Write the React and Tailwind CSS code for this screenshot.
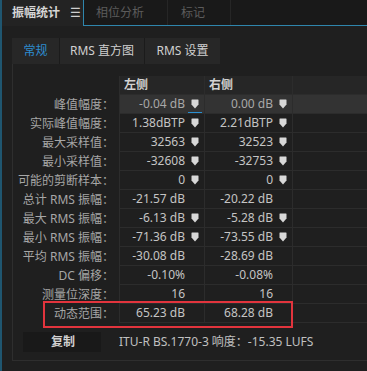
import React from 'react';

const rows = [
  { label: '峰值幅度：', l: '-0.04 dB', r: '0.00 dB', mark: true, sel: true },
  { label: '实际峰值幅度：', l: '1.38dBTP', r: '2.21dBTP', mark: true },
  { label: '最大采样值：', l: '32563', r: '32523', mark: true },
  { label: '最小采样值：', l: '-32608', r: '-32753', mark: true },
  { label: '可能的剪断样本：', l: '0', r: '0', mark: true },
  { label: '总计 RMS 振幅：', l: '-21.57 dB', r: '-20.22 dB' },
  { label: '最大 RMS 振幅：', l: '-6.13 dB', r: '-5.28 dB', mark: true },
  { label: '最小 RMS 振幅：', l: '-71.36 dB', r: '-73.55 dB', mark: true },
  { label: '平均 RMS 振幅：', l: '-30.08 dB', r: '-28.69 dB' },
  { label: 'DC 偏移：', l: '-0.10%', r: '-0.08%' },
  { label: '测量位深度：', l: '16', r: '16' },
  { label: '动态范围：', l: '65.23 dB', r: '68.28 dB' },
];

function Marker() {
  return (
    <svg width="8" height="10" viewBox="0 0 8 10" className="shrink-0">
      <path d="M1 0.5 H7 Q7.5 0.5 7.5 1 V5.5 L4 9.5 L0.5 5.5 V1 Q0.5 0.5 1 0.5 Z" fill="#d8d8d8" />
    </svg>
  );
}

function Cell({ value, mark, sel, underline }) {
  return (
    <div className={`relative h-[19px] flex items-center justify-end pr-[5px] border-l border-b border-[#2c2c2c] ${sel ? 'bg-[#333333]' : ''}`}>
      <span className={sel ? 'text-[#a8a8a8]' : 'text-[#c4c4c4]'}>{value}</span>
      <span className="w-[8px] ml-[6px] flex justify-center">{mark && <Marker />}</span>
      {underline && <div className="absolute right-[2px] bottom-0 w-[14px] h-[1px] bg-[#2a8fd0]" />}
    </div>
  );
}

export default function App() {
  return (
    <div className="w-[367px] h-[371px] overflow-hidden bg-[#1f1f1f] border-l-2 border-[#1f5670] text-[12px] text-[#c4c4c4]" style={{ fontFamily: '"Noto Sans", "Noto Sans CJK SC", sans-serif' }}>
      <div className="flex h-[26px] bg-[#191919]">
        <div className="w-[81px] flex items-center pl-[10px] bg-[#232323] text-[#d6d6d6] font-bold">
          <span>振幅统计</span>
          <span className="ml-[10px] font-normal text-[#cfcfcf]">☰</span>
        </div>
        <div className="flex-1 flex border-l border-b border-[#2f86ad] text-[#5c5c5c]">
          <div className="w-[84px] flex items-center pl-[12px] border-r border-[#262626]">相位分析</div>
          <div className="w-[63px] flex items-center pl-[13px] border-r border-[#262626]">标记</div>
        </div>
      </div>

      <div className="pl-[10px] pt-[12px]">
        <div className="flex h-[26px]">
          <div className="w-[48px] flex items-center justify-center bg-[#272727] text-[#2d8ccf] border-r border-[#1b1b1b]">常规</div>
          <div className="w-[85px] flex items-center justify-center bg-[#272727] text-[#d0d0d0] border-r border-[#1b1b1b]">RMS 直方图</div>
          <div className="w-[75px] flex items-center justify-center bg-[#272727] text-[#d0d0d0]">RMS 设置</div>
        </div>

        <div className="h-[297px] border-l border-b border-[#2e2e2e] bg-[#1f1f1f] pt-[12px]">
          <div className="relative grid grid-cols-[106px_85px_88px_1fr]">
            <div className="h-[19px]" />
            <div className="h-[19px] flex items-center pl-[4px] bg-[#262626] border-l border-b border-[#2c2c2c] text-[#d2d2d2] font-bold">左侧</div>
            <div className="h-[19px] flex items-center pl-[4px] bg-[#262626] border-l border-b border-[#2c2c2c] text-[#d2d2d2] font-bold">右侧</div>
            <div className="h-[19px] bg-[#262626] border-l border-b border-[#2c2c2c]" />
            {rows.map((r) => (
              <React.Fragment key={r.label}>
                <div className="h-[19px] flex items-center justify-end pr-[5px] text-[#a6a6a6] whitespace-nowrap">{r.label}</div>
                <Cell value={r.l} mark={r.mark} sel={r.sel} underline={r.sel} />
                <Cell value={r.r} mark={r.mark} sel={r.sel} />
                <div className={`h-[19px] border-l border-b border-[#2c2c2c] ${r.sel ? 'bg-[#333333]' : ''}`} />
              </React.Fragment>
            ))}
            <div className="absolute left-[30px] top-[225px] w-[250px] h-[27px] border-2 border-[#e2343d]" />
          </div>

          <div className="flex items-center mt-[9px]">
            <div className="ml-[10px] w-[78px] h-[20px] flex items-center pl-[28px] bg-[#191919] text-[#d0d0d0] font-bold">复制</div>
            <div className="ml-[18px] text-[#c0c0c0]">ITU-R BS.1770-3 响度：-15.35 LUFS</div>
          </div>
        </div>
      </div>
    </div>
  );
}
